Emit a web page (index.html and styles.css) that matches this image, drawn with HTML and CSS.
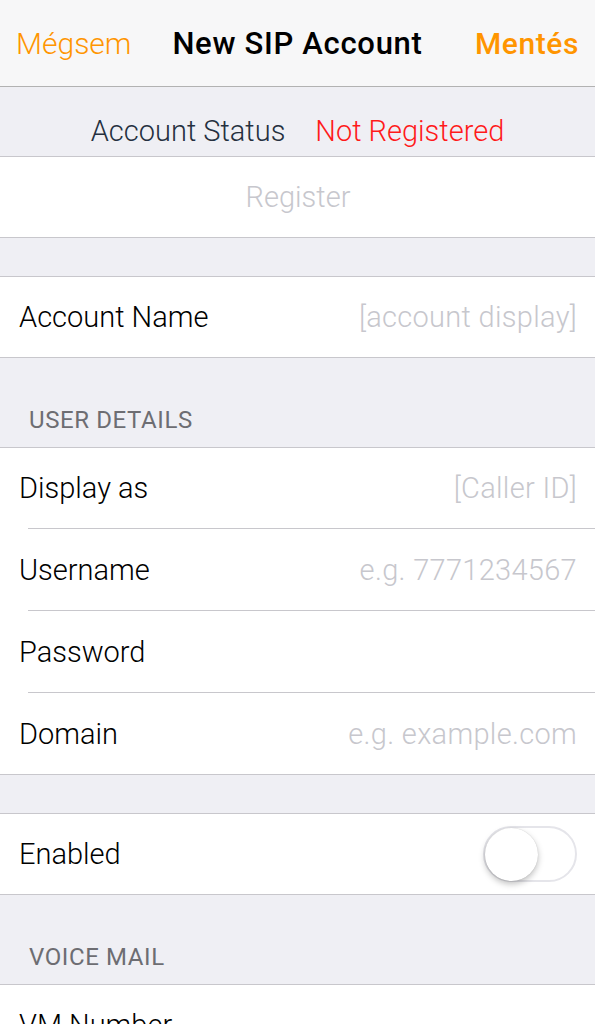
FILE: index.html
```html
<!DOCTYPE html>
<html lang="en">
<head>
  <meta charset="UTF-8">
  <meta name="viewport" content="width=device-width, initial-scale=1.0">
  <title>New SIP Account</title>
  <link rel="stylesheet" href="styles.css">
</head>
<body>
  <!-- Navigation Bar -->
  <nav class="nav-bar">
    <button class="nav-btn cancel">Mégsem</button>
    <div class="nav-title">New SIP Account</div>
    <button class="nav-btn save">Mentés</button>
  </nav>

  <!-- Status -->
  <div class="status-bar">
    <span class="status-label">Account Status</span>
    <span class="status-value">Not Registered</span>
  </div>

  <section class="group no-top">
    <div class="row row-center">
      <span class="row-action">Register</span>
    </div>
  </section>

  <section class="group spaced">
    <div class="row">
      <span class="row-label">Account Name</span>
      <span class="row-value">[account display]</span>
    </div>
  </section>

  <div class="group-header">User Details</div>
  <section class="group">
    <div class="row">
      <span class="row-label">Display as</span>
      <span class="row-value">[Caller ID]</span>
    </div>
    <div class="row">
      <span class="row-label">Username</span>
      <span class="row-value">e.g. 7771234567</span>
    </div>
    <div class="row">
      <span class="row-label">Password</span>
      <span class="row-value"></span>
    </div>
    <div class="row">
      <span class="row-label">Domain</span>
      <span class="row-value">e.g. example.com</span>
    </div>
  </section>

  <section class="group spaced">
    <div class="row">
      <span class="row-label">Enabled</span>
      <span class="switch"><span class="knob"></span></span>
    </div>
  </section>

  <div class="group-header">Voice Mail</div>
  <section class="group">
    <div class="row">
      <span class="row-label">VM Number</span>
      <span class="row-value"></span>
    </div>
  </section>
</body>
</html>
```

FILE: styles.css
```css
/* General Styles */
body {
  font-family: 'Roboto', 'Liberation Sans', sans-serif;
  font-weight: 300;
  margin: 0;
  padding: 0;
  background: #efeff4;
  color: #000;
  width: 595px;
  height: 1024px;
  overflow: hidden;
}

/* Navigation Bar */
.nav-bar {
  height: 86px;
  background: #f7f7f8;
  border-bottom: 1px solid #b2b2b2;
  display: grid;
  grid-template-columns: 1fr auto 1fr;
  align-items: center;
  padding: 0 16px;
}

.nav-btn {
  background: none;
  border: none;
  padding: 0;
  font-family: inherit;
  font-size: 30px;
  color: #ff9500;
  cursor: pointer;
}

.nav-btn.cancel {
  justify-self: start;
  font-weight: 300;
}

.nav-btn.save {
  justify-self: end;
  font-weight: 500;
  letter-spacing: 0.6px;
}

.nav-title {
  font-size: 31px;
  font-weight: 500;
  letter-spacing: 0.7px;
  color: #000;
}

/* Status */
.status-bar {
  height: 70px;
  border-bottom: 1px solid #c8c7cc;
  display: flex;
  justify-content: center;
  align-items: flex-end;
  gap: 30px;
  padding-bottom: 8px;
  box-sizing: border-box;
  font-size: 29px;
}

.status-label {
  color: #25303f;
}

.status-value {
  color: #ff1a1a;
}

/* Groups */
.group {
  background: #fff;
  border-top: 1px solid #c8c7cc;
  border-bottom: 1px solid #c8c7cc;
}

.group.no-top {
  border-top: none;
}

.group.spaced {
  margin-top: 38px;
}

.group-header {
  height: 89px;
  display: flex;
  align-items: flex-end;
  padding: 0 29px 13px;
  box-sizing: border-box;
  font-size: 24px;
  font-weight: 400;
  letter-spacing: 0.6px;
  color: #6d6d72;
  text-transform: uppercase;
}

.row {
  height: 80px;
  display: flex;
  align-items: center;
  justify-content: space-between;
  padding: 0 18px 0 19px;
  font-size: 29px;
}

.row + .row {
  height: 82px;
  padding-top: 1px;
  box-sizing: border-box;
  background: linear-gradient(#c8c7cc, #c8c7cc) 28px 0 / calc(100% - 28px) 1px no-repeat;
}

.row-center {
  justify-content: center;
}

.row-action {
  color: #c7c7cd;
}

.row-value {
  color: #c7c7cd;
  letter-spacing: 0.3px;
}

/* Switch */
.switch {
  width: 94px;
  height: 56px;
  border: 2px solid #e5e5ea;
  border-radius: 30px;
  box-sizing: border-box;
  display: flex;
  align-items: center;
}

.knob {
  width: 53px;
  height: 53px;
  border-radius: 50%;
  background: #fff;
  box-shadow: 0 3px 6px rgba(0, 0, 0, 0.25), 0 0 1px rgba(0, 0, 0, 0.2);
}
```
